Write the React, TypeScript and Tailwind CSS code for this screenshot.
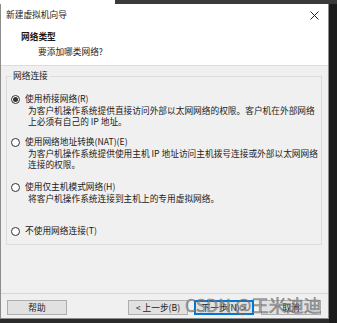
import React from 'react';

interface NetOption {
  label: string;
  desc: string[];
  checked?: boolean;
  mt: string;
}

const options: NetOption[] = [
  {
    label: '使用桥接网络(R)',
    desc: ['为客户机操作系统提供直接访问外部以太网网络的权限。客户机在外部网络', '上必须有自己的 IP 地址。'],
    checked: true,
    mt: 'mt-[11px]',
  },
  {
    label: '使用网络地址转换(NAT)(E)',
    desc: ['为客户机操作系统提供使用主机 IP 地址访问主机拨号连接或外部以太网网络', '连接的权限。'],
    mt: 'mt-[9px]',
  },
  {
    label: '使用仅主机模式网络(H)',
    desc: ['将客户机操作系统连接到主机上的专用虚拟网络。'],
    mt: 'mt-[11px]',
  },
  {
    label: '不使用网络连接(T)',
    desc: [],
    mt: 'mt-[21px]',
  },
];

const Radio: React.FC<{ checked?: boolean }> = ({ checked }) => (
  <span className="w-[9px] h-[9px] rounded-full border border-[#333] bg-white flex items-center justify-center shrink-0">
    {checked && <span className="w-[5px] h-[5px] rounded-full bg-[#333]" />}
  </span>
);

const Btn: React.FC<{ label: string; focused?: boolean; className?: string }> = ({ label, focused, className }) => (
  <div
    className={`w-[60px] h-[15px] flex items-center justify-center bg-[#e1e1e1] text-[#222] ${
      focused ? 'border-2 border-[#0078d7]' : 'border border-[#adadad]'
    } ${className ?? ''}`}
  >
    {label}
  </div>
);

export default function App() {
  return (
    <div
      className="w-[337px] h-[323px] bg-[#2b2b2b] flex flex-col overflow-hidden relative text-[8.7px] text-[#1a1a1a]"
      style={{ fontFamily: '"Noto Sans CJK SC", "Noto Sans", sans-serif' }}
    >
      {/* strip above the dialog */}
      <div className="h-[4px] flex shrink-0">
        <div className="w-[115px] bg-white" />
        <div className="flex-1 bg-[#3a3a3a]" />
      </div>

      <div className="flex flex-1">
        <div className="w-[329px] h-[315px] flex flex-col bg-[#f0f0f0] border-l border-r border-b border-[#8c8c8c]">
          {/* title bar */}
          <div className="h-[22px] bg-white flex items-center justify-between pl-[5px] pr-[9px] shrink-0">
            <span className="leading-[12px]">新建虚拟机向导</span>
            <svg width="9" height="9" viewBox="0 0 9 9" className="stroke-[#222]">
              <path d="M0.5 0.5 L8.5 8.5 M8.5 0.5 L0.5 8.5" strokeWidth="1" />
            </svg>
          </div>

          {/* header */}
          <div className="h-[40px] bg-white border-b border-[#dcdcdc] pt-[5px] shrink-0">
            <div className="pl-[20px] font-bold leading-[12px]">网络类型</div>
            <div className="pl-[37px] mt-[3px] leading-[12px] text-[#222]">要添加哪类网络?</div>
          </div>

          {/* group box */}
          <fieldset className="mt-[4px] mx-[5px] mr-[6px] border border-[#dcdcdc] px-0 pb-[7px] pt-0 min-w-0">
            <legend className="ml-[4px] px-[2px] leading-[12px] text-[#222]">网络连接</legend>
            {options.map((opt) => (
              <div key={opt.label} className={opt.mt}>
                <div className="flex items-center gap-[5px] pl-[4px] h-[12px]">
                  <Radio checked={opt.checked} />
                  <span className="leading-[12px] whitespace-nowrap">{opt.label}</span>
                </div>
                {opt.desc.map((d) => (
                  <div key={d} className="pl-[21px] leading-[11px] whitespace-nowrap text-[#222]">
                    {d}
                  </div>
                ))}
              </div>
            ))}
          </fieldset>

          {/* separator and buttons */}
          <div className="mt-[48px] border-t border-[#d6d6d6]" />
          <div className="flex items-center mt-[6px] pl-[6px]">
            <Btn label="帮助" />
            <Btn label="< 上一步(B)" className="ml-[61px]" />
            <Btn label="下一步(N) >" focused className="ml-[6px]" />
            <Btn label="取消" className="ml-[7px]" />
          </div>
        </div>
        <div className="flex-1 bg-[#1c1c1c]" />
      </div>

      {/* watermark */}
      <div
        className="absolute left-[185px] top-[295px] text-[17.5px] leading-[20px] text-[rgba(140,140,140,0.7)] whitespace-nowrap pointer-events-none"
        style={{ fontFamily: '"Noto Sans CJK SC", sans-serif', WebkitTextStroke: '0.5px rgba(80,80,80,0.7)' }}
      >
        CSDN @王米迪迪
      </div>
    </div>
  );
}
